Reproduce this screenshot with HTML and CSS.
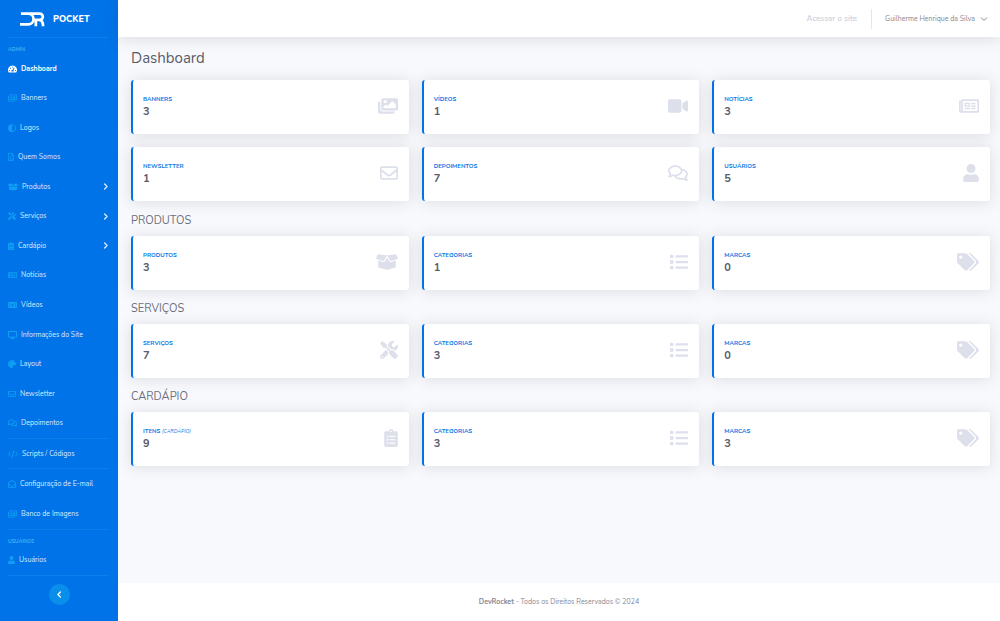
FILE: index.html
```html
<!DOCTYPE html>
<html lang="pt-BR">
<head>
<meta charset="utf-8">
<meta name="viewport" content="width=device-width, initial-scale=1">
<title>Dashboard</title>
<link rel="stylesheet" href="styles.css">
</head>
<body>
<svg class="sprite" aria-hidden="true">
<symbol id="images" viewBox="0 0 576 512"><path d="M480 416v16c0 26.51-21.49 48-48 48H48c-26.51 0-48-21.49-48-48V176c0-26.51 21.49-48 48-48h16v48H54a6 6 0 0 0-6 6v244a6 6 0 0 0 6 6h372a6 6 0 0 0 6-6v-10h48zm42-336H150a6 6 0 0 0-6 6v244a6 6 0 0 0 6 6h372a6 6 0 0 0 6-6V86a6 6 0 0 0-6-6zm6-48c26.51 0 48 21.49 48 48v256c0 26.51-21.49 48-48 48H144c-26.51 0-48-21.49-48-48V80c0-26.51 21.49-48 48-48h384zM264 144c0 22.091-17.909 40-40 40s-40-17.909-40-40 17.909-40 40-40 40 17.909 40 40zm-72 96l39.515-39.515c4.686-4.686 12.284-4.686 16.971 0L288 240l103.515-103.515c4.686-4.686 12.284-4.686 16.971 0L480 208v80H192v-48z"/></symbol>
<symbol id="images-solid" viewBox="0 0 576 512"><path d="M480 416v16c0 26.51-21.49 48-48 48H48c-26.51 0-48-21.49-48-48V176c0-26.51 21.49-48 48-48h16v208c0 44.112 35.888 80 80 80h336zm96-80V80c0-26.51-21.49-48-48-48H144c-26.51 0-48 21.49-48 48v256c0 26.51 21.49 48 48 48h384c26.51 0 48-21.49 48-48zM256 128c0 26.51-21.49 48-48 48s-48-21.49-48-48 21.49-48 48-48 48 21.49 48 48zm-96 144l55.515-55.515c4.686-4.686 12.284-4.686 16.971 0L272 256l135.515-135.515c4.686-4.686 12.284-4.686 16.971 0L512 208v112H160v-48z"/></symbol>
<symbol id="video" viewBox="0 0 576 512"><path d="M336.2 64H47.8C21.4 64 0 85.4 0 111.8v288.4C0 426.6 21.4 448 47.8 448h288.4c26.4 0 47.8-21.4 47.8-47.8V111.8c0-26.4-21.4-47.8-47.8-47.8zm189.4 37.7L416 177.3v157.4l109.6 75.5c21.2 14.6 50.4-.3 50.4-25.8V127.5c0-25.4-29.1-40.4-50.4-25.8z"/></symbol>
<symbol id="news" viewBox="0 0 576 512"><path d="M552 64H112c-20.858 0-38.643 13.377-45.248 32H24c-13.255 0-24 10.745-24 24v272c0 30.928 25.072 56 56 56h496c13.255 0 24-10.745 24-24V88c0-13.255-10.745-24-24-24zM48 392V144h16v248c0 4.411-3.589 8-8 8s-8-3.589-8-8zm480 8H111.422c.374-2.614.578-5.283.578-8V112h416v288zM172 280h136c6.627 0 12-5.373 12-12v-96c0-6.627-5.373-12-12-12H172c-6.627 0-12 5.373-12 12v96c0 6.627 5.373 12 12 12zm28-80h80v40h-80v-40zm-40 140v-24c0-6.627 5.373-12 12-12h136c6.627 0 12 5.373 12 12v24c0 6.627-5.373 12-12 12H172c-6.627 0-12-5.373-12-12zm192 0v-24c0-6.627 5.373-12 12-12h104c6.627 0 12 5.373 12 12v24c0 6.627-5.373 12-12 12H364c-6.627 0-12-5.373-12-12zm0-144v-24c0-6.627 5.373-12 12-12h104c6.627 0 12 5.373 12 12v24c0 6.627-5.373 12-12 12H364c-6.627 0-12-5.373-12-12zm0 72v-24c0-6.627 5.373-12 12-12h104c6.627 0 12 5.373 12 12v24c0 6.627-5.373 12-12 12H364c-6.627 0-12-5.373-12-12z"/></symbol>
<symbol id="envelope" viewBox="0 0 512 512"><path d="M464 64H48C21.49 64 0 85.49 0 112v288c0 26.51 21.49 48 48 48h416c26.51 0 48-21.49 48-48V112c0-26.51-21.49-48-48-48zm0 48v40.805c-22.422 18.259-58.168 46.651-134.587 106.49-16.841 13.247-50.201 45.072-73.413 44.701-23.208.375-56.579-31.459-73.413-44.701C106.18 199.465 70.425 171.067 48 152.805V112h416zM48 400V214.398c22.914 18.251 55.409 43.862 104.938 82.646 21.857 17.205 60.134 55.186 103.062 54.955 42.717.231 80.509-37.199 103.053-54.947 49.528-38.783 82.032-64.401 104.947-82.653V400H48z"/></symbol>
<symbol id="comments" viewBox="0 0 576 512"><path d="M532 386.2c27.5-27.1 44-61.1 44-98.2 0-80-76.5-146.1-176.2-157.9C368.3 72.5 294.3 32 208 32 93.1 32 0 103.6 0 192c0 37 16.5 71 44 98.2-15.3 30.7-37.3 54.5-37.7 54.9-6.3 6.7-8.1 16.5-4.4 25 3.6 8.5 12 14 21.2 14 53.5 0 96.7-20.2 125.2-38.8 9.2 2.1 18.7 3.7 28.4 4.9C208.1 407.6 281.8 448 368 448c20.8 0 40.8-2.4 59.8-6.8C456.3 459.7 499.4 480 553 480c9.2 0 17.5-5.5 21.2-14 3.6-8.5 1.9-18.3-4.4-25-.4-.3-22.5-24.1-37.8-54.8zm-392.8-92.3L122.1 305c-14.1 9.1-28.5 16.3-43.1 21.4 2.7-4.7 5.4-9.7 8-14.8l15.5-31.1L77.7 256C64.2 242.6 48 220.7 48 192c0-60.7 73.3-112 160-112s160 51.3 160 112-73.3 112-160 112c-16.5 0-33-1.9-49-5.6l-19.8-4.5zM498.3 352l-24.7 24.4 15.5 31.1c2.6 5.1 5.3 10.1 8 14.8-14.6-5.1-29-12.3-43.1-21.4l-17.1-11.1-19.9 4.6c-16 3.7-32.5 5.6-49 5.6-54 0-102.2-20.1-131.3-49.7C338 339.5 416 272.9 416 192c0-3.4-.4-6.7-.7-10C479.7 196.5 528 238.8 528 288c0 28.7-16.2 50.6-29.7 64z"/></symbol>
<symbol id="user" viewBox="0 0 448 512"><path d="M224 256c70.7 0 128-57.3 128-128S294.7 0 224 0 96 57.3 96 128s57.3 128 128 128zm89.6 32h-16.7c-22.2 10.2-46.9 16-72.9 16s-50.6-5.8-72.9-16h-16.7C60.2 288 0 348.2 0 422.4V464c0 26.5 21.5 48 48 48h352c26.5 0 48-21.5 48-48v-41.6c0-74.2-60.2-134.4-134.4-134.4z"/></symbol>
<symbol id="box" viewBox="0 0 640 512"><path d="M425.7 256c-16.9 0-32.8-9-41.4-23.4L320 126l-64.2 106.6c-8.7 14.5-24.6 23.5-41.5 23.5-4.5 0-9-.6-13.3-1.9L64 215v178c0 14.7 10 27.5 24.2 31l216.2 54.1c10.2 2.5 20.9 2.5 31 0L551.8 424c14.2-3.6 24.2-16.4 24.2-31V215l-137 39.1c-4.3 1.3-8.8 1.9-13.3 1.9zm212.6-112.2L586.8 41c-3.1-6.2-9.8-9.8-16.7-8.9L320 64l91.7 152.1c3.8 6.3 11.4 9.3 18.5 7.3l197.9-56.5c9.9-2.9 14.7-13.9 10.2-23.1zM53.2 41L1.7 143.8c-4.6 9.2.3 20.2 10.1 23l197.9 56.5c7.1 2 14.7-1 18.5-7.3L320 64 69.8 32.1c-6.9-.8-13.5 2.7-16.6 8.9z"/></symbol>
<symbol id="tools" viewBox="0 0 512 512"><path d="M501.1 395.7L384 278.6c-23.1-23.1-57.6-27.6-85.4-13.9L192 158.1V96L64 0 0 64l96 128h62.1l106.6 106.6c-13.6 27.8-9.2 62.3 13.9 85.4l117.1 117.1c14.6 14.6 38.2 14.6 52.7 0l52.7-52.7c14.5-14.6 14.5-38.2 0-52.7zM331.7 225c28.3 0 54.9 11 74.9 31l19.4 19.4c15.8-6.9 30.8-16.5 43.8-29.5 37.1-37.1 49.7-89.3 37.9-136.7-2.2-9-13.5-12.1-20.1-5.5l-74.4 74.4-67.9-11.3L334 98.9l74.4-74.4c6.6-6.6 3.4-17.9-5.7-20.2-47.4-11.7-99.6.9-136.6 37.9-28.5 28.5-41.9 66.1-41.2 103.6l82.1 82.1c8.1-1.9 16.5-2.9 24.7-2.9zm-103.9 82l-56.7-56.7L18.7 402.8c-25 25-25 65.5 0 90.5s65.5 25 90.5 0l123.6-123.6c-7.6-19.9-9.9-41.6-5-62.7zM64 472c-13.2 0-24-10.8-24-24 0-13.3 10.7-24 24-24s24 10.7 24 24c0 13.2-10.7 24-24 24z"/></symbol>
<symbol id="clipboard" viewBox="0 0 384 512"><path fill-rule="evenodd" d="M336 64h-80a64 64 0 0 0-128 0H48C21.5 64 0 85.500 0 112v352c0 26.500 21.500 48 48 48h288c26.500 0 48-21.500 48-48V112c0-26.500-21.500-48-48-48zM192 40a24 24 0 1 1 0 48 24 24 0 0 1 0-48zM96 184a24 24 0 1 1 0 48 24 24 0 0 1 0-48zm0 96a24 24 0 1 1 0 48 24 24 0 0 1 0-48zm0 96a24 24 0 1 1 0 48 24 24 0 0 1 0-48zM152 192h160v32H152zm0 96h160v32H152zm0 96h160v32H152z"/></symbol>
<symbol id="list" viewBox="0 0 512 512"><path d="M80 368H16a16 16 0 0 0-16 16v64a16 16 0 0 0 16 16h64a16 16 0 0 0 16-16v-64a16 16 0 0 0-16-16zm0-320H16A16 16 0 0 0 0 64v64a16 16 0 0 0 16 16h64a16 16 0 0 0 16-16V64a16 16 0 0 0-16-16zm0 160H16a16 16 0 0 0-16 16v64a16 16 0 0 0 16 16h64a16 16 0 0 0 16-16v-64a16 16 0 0 0-16-16zm416 176H176a16 16 0 0 0-16 16v32a16 16 0 0 0 16 16h320a16 16 0 0 0 16-16v-32a16 16 0 0 0-16-16zm0-320H176a16 16 0 0 0-16 16v32a16 16 0 0 0 16 16h320a16 16 0 0 0 16-16V80a16 16 0 0 0-16-16zm0 160H176a16 16 0 0 0-16 16v32a16 16 0 0 0 16 16h320a16 16 0 0 0 16-16v-32a16 16 0 0 0-16-16z"/></symbol>
<symbol id="tags" viewBox="0 0 640 512"><path d="M497.941 225.941L286.059 14.059A48 48 0 0 0 252.118 0H48C21.49 0 0 21.49 0 48v204.118a48 48 0 0 0 14.059 33.941l211.882 211.882c18.744 18.745 49.136 18.746 67.882 0l204.118-204.118c18.745-18.745 18.745-49.137 0-67.882zM112 160c-26.51 0-48-21.49-48-48s21.49-48 48-48 48 21.49 48 48-21.49 48-48 48zm513.941 133.823L421.823 497.941c-18.745 18.745-49.137 18.745-67.882 0l-.36-.36L527.64 323.522c16.999-16.999 26.36-39.6 26.36-63.64s-9.362-46.641-26.36-63.64L331.397 0h48.721a48 48 0 0 1 33.941 14.059l211.882 211.882c18.745 18.745 18.745 49.137 0 67.882z"/></symbol>
<symbol id="gauge" viewBox="0 0 576 512"><path fill-rule="evenodd" d="M288 32a288 288 0 0 0-248 434c6 9 15 14 26 14h444c11 0 20-5 26-14A288 288 0 0 0 288 32zm0 60a34 34 0 1 1 0 68 34 34 0 0 1 0-68zM96 320a34 34 0 1 1 0 68 34 34 0 0 1 0-68zm56-154a34 34 0 1 1 0 68 34 34 0 0 1 0-68zm228-14 44 16-72 190c14 22 12 42 4 60H220c-20-50 14-100 74-98zm100 168a34 34 0 1 1 0 68 34 34 0 0 1 0-68z"/></symbol>
<symbol id="adjust" viewBox="0 0 512 512"><path fill-rule="evenodd" d="M256 8a248 248 0 1 0 0 496 248 248 0 0 0 0-496zm0 60v376a188 188 0 0 0 0-376z"/></symbol>
<symbol id="file" viewBox="0 0 384 512"><path fill-rule="evenodd" d="M48 0h200l136 128v336c0 26-22 48-48 48H48c-26 0-48-22-48-48V48C0 22 22 0 48 0zm0 48v416h288V160H224V48zm48 180h192v40H96zm0 84h192v40H96zm0 80h192v32H96z"/></symbol>
<symbol id="film" viewBox="0 0 576 512"><path fill-rule="evenodd" d="M48 64h480c26 0 48 22 48 48v288c0 26-22 48-48 48H48c-26 0-48-22-48-48V112c0-26 22-48 48-48zm10 60v56h56v-56zm0 104v56h56v-56zm0 104v56h56v-56zm404-208v56h56v-56zm0 104v56h56v-56zm0 104v56h56v-56zM230 160v192l150-96z"/></symbol>
<symbol id="desktop" viewBox="0 0 576 512"><path fill-rule="evenodd" d="M48 0h480c26 0 48 22 48 48v320c0 26-22 48-48 48H336l16 48h56c32 0 32 48 0 48H168c-32 0-32-48 0-48h56l16-48H48c-26 0-48-22-48-48V48C0 22 22 0 48 0zm16 64v288h448V64z"/></symbol>
<symbol id="palette" viewBox="0 0 512 512"><path fill-rule="evenodd" d="M256 0a256 256 0 1 0 20 511c40-6 52-50 34-84-22-44 8-97 58-97h79c36 0 65-29 65-65C511 119 397 0 256 0zM96 224a32 32 0 1 1 0 64 32 32 0 0 1 0-64zm32-128a32 32 0 1 1 0 64 32 32 0 0 1 0-64zm128-64a32 32 0 1 1 0 64 32 32 0 0 1 0-64zm128 64a32 32 0 1 1 0 64 32 32 0 0 1 0-64z"/></symbol>
<symbol id="code" viewBox="0 0 640 512"><path fill="none" stroke="currentColor" stroke-width="56" stroke-linecap="round" stroke-linejoin="round" d="M160 120 32 256l128 136M480 120l128 136-128 136M380 30 260 482"/></symbol>
<symbol id="mail-open" viewBox="0 0 512 512"><path fill-rule="evenodd" d="M256 0 494 166c12 9 18 21 18 36v262c0 26-22 48-48 48H48c-26 0-48-22-48-48V202c0-15 6-27 18-36zm0 58L48 206v50l208 140 208-140v-50zM48 314v150h416V314L256 452z"/></symbol>
<symbol id="chevron-right" viewBox="0 0 8 8"><path fill="none" stroke="currentColor" stroke-width="1.500" stroke-linecap="round" stroke-linejoin="round" d="M3 1.200 5.800 4 3 6.800"/></symbol>
</svg>
<div class="layout">
<aside class="sidebar">
  <a class="brand" href="#">
    <svg class="brand-mark" viewBox="0 0 26 16" aria-hidden="true"><path fill="none" stroke="currentColor" stroke-width="2.800" stroke-linejoin="round" d="M1 2.400h7.500a5.500 5.500 0 0 1 0 11.200H0M10 2.400h10.500a3.200 3.200 0 0 1 0 6.500h-4v6.600M19.500 8.900c3 0 4.500 2 4.500 6.600"/></svg>
    <span>POCKET</span>
  </a>
  <ul class="nav">
    <li class="divider"></li>
    <li class="nav-heading">ADMIN</li>
    <li class="item active"><a href="#"><svg class="w9"><use href="#gauge"/></svg>Dashboard</a></li>
    <li class="item"><a href="#"><svg class="w9"><use href="#images"/></svg>Banners</a></li>
    <li class="item"><a href="#"><svg class="w8"><use href="#adjust"/></svg>Logos</a></li>
    <li class="item"><a href="#"><svg class="w6"><use href="#file"/></svg>Quem Somos</a></li>
    <li class="item"><a href="#"><svg class="w10"><use href="#box"/></svg>Produtos<svg class="more"><use href="#chevron-right"/></svg></a></li>
    <li class="item"><a href="#"><svg class="w8"><use href="#tools"/></svg>Serviços<svg class="more"><use href="#chevron-right"/></svg></a></li>
    <li class="item"><a href="#"><svg class="w6"><use href="#clipboard"/></svg>Cardápio<svg class="more"><use href="#chevron-right"/></svg></a></li>
    <li class="item"><a href="#"><svg class="w9"><use href="#news"/></svg>Notícias</a></li>
    <li class="item"><a href="#"><svg class="w9"><use href="#film"/></svg>Vídeos</a></li>
    <li class="item"><a href="#"><svg class="w9"><use href="#desktop"/></svg>Informações do Site</a></li>
    <li class="item"><a href="#"><svg class="w8"><use href="#palette"/></svg>Layout</a></li>
    <li class="item"><a href="#"><svg class="w8"><use href="#envelope"/></svg>Newsletter</a></li>
    <li class="item"><a href="#"><svg class="w9"><use href="#comments"/></svg>Depoimentos</a></li>
    <li class="divider"></li>
    <li class="item"><a href="#"><svg class="w10"><use href="#code"/></svg>Scripts / Códigos</a></li>
    <li class="divider"></li>
    <li class="item"><a href="#"><svg class="w8"><use href="#mail-open"/></svg>Configuração de E-mail</a></li>
    <li class="item"><a href="#"><svg class="w9"><use href="#images"/></svg>Banco de Imagens</a></li>
    <li class="divider"></li>
    <li class="nav-heading">USUÁRIOS</li>
    <li class="item"><a href="#"><svg class="w7"><use href="#user"/></svg>Usuários</a></li>
    <li class="divider"></li>
  </ul>
  <button class="toggle" type="button" aria-label="Recolher menu"><svg viewBox="0 0 8 8"><path fill="none" stroke="currentColor" stroke-width="1.500" stroke-linecap="round" stroke-linejoin="round" d="M5 1.200 2.200 4 5 6.800"/></svg></button>
</aside>
<div class="page">
  <header class="topbar">
    <a class="site-link" href="#">Acessar o site</a>
    <button class="account" type="button">Guilherme Henrique da Silva<svg viewBox="0 0 8 6"><path fill="none" stroke="currentColor" d="M1 1.500 4 4.500 7 1.500"/></svg></button>
  </header>
  <main>
    <h1>Dashboard</h1>
    <section class="cards overview">
      <article class="card"><div><h3>BANNERS</h3><p>3</p></div><svg class="i-576"><use href="#images-solid"/></svg></article>
      <article class="card"><div><h3>VÍDEOS</h3><p>1</p></div><svg class="i-576"><use href="#video"/></svg></article>
      <article class="card"><div><h3>NOTÍCIAS</h3><p>3</p></div><svg class="i-576"><use href="#news"/></svg></article>
      <article class="card"><div><h3>NEWSLETTER</h3><p>1</p></div><svg class="i-512"><use href="#envelope"/></svg></article>
      <article class="card"><div><h3>DEPOIMENTOS</h3><p>7</p></div><svg class="i-576"><use href="#comments"/></svg></article>
      <article class="card"><div><h3>USUÁRIOS</h3><p>5</p></div><svg class="i-448"><use href="#user"/></svg></article>
    </section>
    <h2>PRODUTOS</h2>
    <section class="cards">
      <article class="card"><div><h3>PRODUTOS</h3><p>3</p></div><svg class="i-640"><use href="#box"/></svg></article>
      <article class="card"><div><h3>CATEGORIAS</h3><p>1</p></div><svg class="i-512"><use href="#list"/></svg></article>
      <article class="card"><div><h3>MARCAS</h3><p>0</p></div><svg class="i-640"><use href="#tags"/></svg></article>
    </section>
    <h2>SERVIÇOS</h2>
    <section class="cards">
      <article class="card"><div><h3>SERVIÇOS</h3><p>7</p></div><svg class="i-512"><use href="#tools"/></svg></article>
      <article class="card"><div><h3>CATEGORIAS</h3><p>3</p></div><svg class="i-512"><use href="#list"/></svg></article>
      <article class="card"><div><h3>MARCAS</h3><p>0</p></div><svg class="i-640"><use href="#tags"/></svg></article>
    </section>
    <h2>CARDÁPIO</h2>
    <section class="cards">
      <article class="card"><div><h3>ITENS <small>(CARDÁPIO)</small></h3><p>9</p></div><svg class="i-384"><use href="#clipboard"/></svg></article>
      <article class="card"><div><h3>CATEGORIAS</h3><p>3</p></div><svg class="i-512"><use href="#list"/></svg></article>
      <article class="card"><div><h3>MARCAS</h3><p>3</p></div><svg class="i-640"><use href="#tags"/></svg></article>
    </section>
  </main>
  <footer><strong>DevRocket</strong> - Todos os Direitos Reservados © 2024</footer>
</div>
</div>
</body>
</html>
```
FILE: styles.css
```css
* { box-sizing: border-box; }
body {
  margin: 0;
  font-family: Nunito, "Open Sans", "Noto Sans", sans-serif;
  color: #5a5c69;
  background: #f8f9fc;
}
a { color: inherit; text-decoration: none; }
button { font: inherit; border: 0; padding: 0; background: none; cursor: pointer; }
h1, h2, h3, p, ul { margin: 0; padding: 0; }
svg { fill: currentColor; flex: none; }
.sprite { display: none; }
.layout { display: flex; min-height: 100vh; }

/* Sidebar */
.sidebar {
  flex: none;
  width: 118px;
  display: flex;
  flex-direction: column;
  background: #0073e8;
  color: #dcedfd;
}
.brand {
  height: 37px;
  display: flex;
  align-items: center;
  gap: 8px;
  padding-left: 20px;
  color: #fff;
  font-size: 9px;
  font-weight: 800;
}
.brand-mark { width: 25px; height: 16px; }
.nav {
  flex: 1;
  display: flex;
  flex-direction: column;
  list-style: none;
  padding: 0 9px 0 8px;
}
.divider { height: 1px; background: #0c80ec; }
.nav-heading {
  height: 16px;
  padding-top: 7px;
  font-size: 5px;
  line-height: 9px;
  font-weight: 700;
  color: #3fb0f8;
}
.item { flex: 1; display: flex; font-size: 7px; line-height: 10px; }
.item a { flex: 1; display: flex; align-items: center; gap: 4px; white-space: nowrap; }
.item svg { height: 8px; color: #0f9ef4; }
.item.active { color: #fff; font-weight: 700; }
.item.active svg { color: #fff; }
.item .more { width: 7px; height: 7px; margin-left: auto; color: #dcedfd; }
.w6 { width: 6px; }
.w7 { width: 7px; }
.w8 { width: 8px; }
.w9 { width: 9px; }
.w10 { width: 10px; }
.toggle {
  width: 21px;
  height: 21px;
  margin: 8px auto 16px;
  display: grid;
  place-items: center;
  border-radius: 50%;
  background: #0a8eec;
  color: #fff;
}
.toggle svg { width: 7px; height: 7px; }

/* Page */
.page { flex: 1; min-width: 0; display: flex; flex-direction: column; }
.topbar {
  height: 37px;
  display: flex;
  align-items: center;
  justify-content: flex-end;
  padding-right: 12px;
  background: #fff;
  box-shadow: 0 2px 15px rgba(58, 59, 69, .15);
}
.site-link { font-size: 8px; font-weight: 600; color: #cdd0de; padding-right: 14px; }
.account {
  display: flex;
  align-items: center;
  gap: 5px;
  height: 20px;
  padding-left: 13px;
  border-left: 1px solid #e3e6f0;
  font-size: 7px;
  color: #858796;
}
.account svg { width: 8px; height: 6px; }
main { flex: 1; padding: 10px 10px 24px 13px; }
h1 { font-size: 15px; line-height: 22px; font-weight: 400; margin-bottom: 11px; }
h2 { font-size: 11px; line-height: 14px; font-weight: 400; padding: 12px 0 8px; color: #6e707e; }
.cards { display: grid; grid-template-columns: repeat(3, 1fr); gap: 13px; }
.overview { margin-bottom: 1px; }
.card {
  display: flex;
  align-items: center;
  justify-content: space-between;
  padding: 14px 11px 14px 10px;
  border-left: 2px solid #0073e8;
  border-radius: 3px;
  background: #fff;
  box-shadow: 0 1px 15px rgba(58, 59, 69, .15);
}
.card h3 { font-size: 6px; line-height: 10px; font-weight: 700; color: #0a78e6; }
.card small { font-size: 5px; line-height: 5px; font-weight: 400; font-style: italic; }
.card p { font-size: 11px; line-height: 16px; font-weight: 700; }
.card svg { height: 18px; margin-bottom: 3px; color: #dddfeb; }
.i-384 { width: 14px; }
.i-448 { width: 16px; }
.i-512 { width: 18px; }
.i-576 { width: 20px; }
.i-640 { width: 22px; }
footer { padding: 14px; line-height: 10px; background: #fff; font-size: 7px; text-align: center; color: #858796; }
```
